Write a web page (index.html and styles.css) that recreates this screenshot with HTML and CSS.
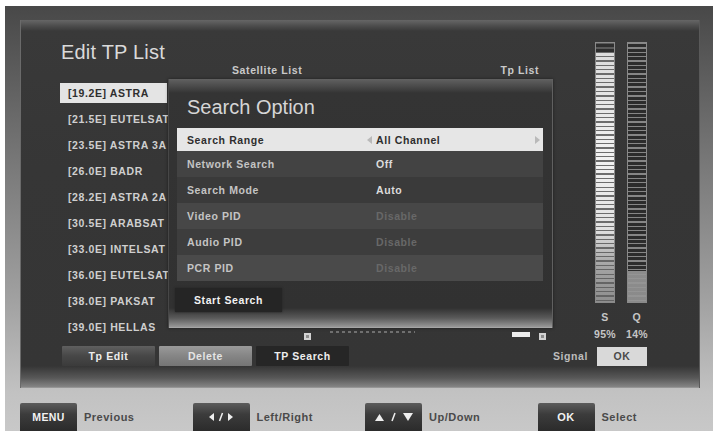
FILE: index.html
```html
<!DOCTYPE html>
<html lang="en">
<head>
<meta charset="utf-8">
<title>Edit TP List</title>
<link rel="stylesheet" href="styles.css">
</head>
<body>
<div class="frame">
  <div class="panel">
    <div class="main">
      <h1 class="title">Edit TP List</h1>
      <div class="heads"><span>Satellite List</span><span>Tp List</span></div>
      <div class="lists">
        <ul class="sat-list">
          <li class="sat is-current">[19.2E] ASTRA</li>
          <li class="sat">[21.5E] EUTELSAT 21A</li>
          <li class="sat">[23.5E] ASTRA 3A</li>
          <li class="sat">[26.0E] BADR</li>
          <li class="sat">[28.2E] ASTRA 2A</li>
          <li class="sat">[30.5E] ARABSAT</li>
          <li class="sat">[33.0E] INTELSAT</li>
          <li class="sat">[36.0E] EUTELSAT W4</li>
          <li class="sat">[38.0E] PAKSAT</li>
          <li class="sat">[39.0E] HELLAS</li>
        </ul>
        <div class="tp-col">
          <div class="tp-foot">
            <span class="knob"></span>
            <span class="ghost"></span>
            <span class="thumb"></span>
            <span class="knob knob-end"></span>
          </div>
        </div>
      </div>
      <div class="actions">
        <button class="act act-edit">Tp Edit</button>
        <button class="act act-delete">Delete</button>
        <button class="act act-search">TP Search</button>
        <span class="signal-label">Signal</span>
      </div>
    </div>

    <div class="meters">
      <div class="bars">
        <div class="bar bar-s"></div>
        <div class="bar bar-q"></div>
      </div>
      <div class="meter-row"><span>S</span><span>Q</span></div>
      <div class="meter-row pct"><span>95%</span><span>14%</span></div>
      <div class="signal-ok">OK</div>
    </div>

    <div class="dialog">
      <h2 class="dialog-title">Search Option</h2>
      <div class="opts">
        <div class="opt is-current">
          <span class="opt-label">Search Range</span>
          <span class="opt-value">
            <svg class="arrow arrow-l" width="5" height="8" viewBox="0 0 5 8"><path d="M0 4 5 0v8z" fill="#b9b9b9"/></svg>
            All Channel
            <svg class="arrow arrow-r" width="5" height="8" viewBox="0 0 5 8"><path d="M5 4 0 0v8z" fill="#b9b9b9"/></svg>
          </span>
        </div>
        <div class="opt"><span class="opt-label">Network Search</span><span class="opt-value">Off</span></div>
        <div class="opt"><span class="opt-label">Search Mode</span><span class="opt-value">Auto</span></div>
        <div class="opt"><span class="opt-label">Video PID</span><span class="opt-value is-off">Disable</span></div>
        <div class="opt"><span class="opt-label">Audio PID</span><span class="opt-value is-off">Disable</span></div>
        <div class="opt"><span class="opt-label">PCR PID</span><span class="opt-value is-off">Disable</span></div>
      </div>
      <button class="start">Start Search</button>
    </div>
  </div>

  <div class="keybar">
    <div class="key-item"><span class="key">MENU</span><span class="key-label">Previous</span></div>
    <div class="key-item">
      <span class="key">
        <svg width="26" height="10" viewBox="0 0 26 10"><path d="M1 5 6 1v8z" fill="#eee"/><path d="M14.5 1 11.5 9" stroke="#eee" stroke-width="1.5"/><path d="M25 5 20 1v8z" fill="#eee"/></svg>
      </span>
      <span class="key-label">Left/Right</span>
    </div>
    <div class="key-item">
      <span class="key">
        <svg width="38" height="10" viewBox="0 0 38 10"><path d="M0 9 4.5 2 9 9z" fill="#eee"/><path d="M20 1 17 9" stroke="#eee" stroke-width="1.5"/><path d="M28 1h10l-5 8z" fill="#eee"/></svg>
      </span>
      <span class="key-label">Up/Down</span>
    </div>
    <div class="key-item"><span class="key key-ok">OK</span><span class="key-label">Select</span></div>
  </div>
</div>
</body>
</html>
```

FILE: styles.css
```css
html, body {
  margin: 0;
  padding: 0;
}

body {
  width: 718px;
  height: 434px;
  overflow: hidden;
  background: #ffffff;
  font-family: "Liberation Sans", Arial, Helvetica, sans-serif;
}

/* outer bezel, dark at the top and fading to light grey */
.frame {
  box-sizing: border-box;
  width: 708px;
  height: 425px;
  margin: 6px 5px 0;
  padding: 14px 13px 0 15px;
  display: flex;
  flex-direction: column;
  background: linear-gradient(to bottom,
    #484848 0%, #5a5a5a 14%, #7c7c7c 40%, #a2a2a2 70%, #c2c2c2 91%, #c8c8c8 100%);
}

/* main dark screen */
.panel {
  position: relative;
  box-sizing: border-box;
  height: 368px;
  padding: 20px 50px 0 40px;
  display: grid;
  grid-template-columns: 530px 55px;
  column-gap: 5px;
  align-items: start;
  background: linear-gradient(to bottom,
    #666 0, #4c4c4c 6px, #393939 11px, #363636 40%,
    #353535 calc(100% - 22px), #585858 calc(100% - 10px),
    #858585 calc(100% - 1px), #a8a8a8 100%);
  box-shadow: inset 1px 0 0 #6a6a6a, inset -1px 0 0 #595959;
}

.main {
  display: flex;
  flex-direction: column;
}

.title {
  margin: 0;
  padding-left: 1px;
  font-size: 20px;
  line-height: 24px;
  font-weight: normal;
  letter-spacing: 0.2px;
  color: #dadada;
}

.heads,
.sat,
.act,
.signal-label,
.meter-row,
.signal-ok,
.opt,
.start {
  font-weight: bold;
  font-size: 10.5px;
  letter-spacing: 0.6px;
}

.heads {
  display: flex;
  justify-content: space-between;
  padding: 0 51px 0 172px;
  line-height: 12px;
  color: #c9c9c9;
}

.lists {
  display: grid;
  grid-template-columns: 107px 1fr;
  margin-top: 4px;
}

.sat-list {
  list-style: none;
  margin: 0;
  padding: 3px 0;
  display: flex;
  flex-direction: column;
  gap: 6px;
}

.sat {
  height: 20px;
  line-height: 20px;
  padding-left: 8px;
  white-space: nowrap;
  color: #cfcfcf;
}

.sat.is-current {
  background: #e4e4e4;
  color: #2e2e2e;
}

.tp-col {
  display: flex;
  flex-direction: column;
  justify-content: flex-end;
}

.tp-foot {
  display: flex;
  align-items: flex-start;
  height: 9px;
  padding-left: 137px;
}

.knob {
  width: 7px;
  height: 7px;
  margin-top: 2px;
  background: #8c8c8c;
  box-shadow: inset 0 0 0 2px #d2d2d2;
}

.knob-end {
  margin-left: 9px;
}

.ghost {
  width: 85px;
  height: 2px;
  margin-left: 19px;
  background: repeating-linear-gradient(to right, #707070 0 3px, transparent 3px 6px);
}

.thumb {
  width: 18px;
  height: 5px;
  margin-top: 1px;
  margin-left: 97px;
  background: #ececec;
}

.actions {
  display: flex;
  align-items: center;
  margin-top: 6px;
  padding-left: 2px;
}

.act {
  width: 93px;
  height: 20px;
  padding: 0;
  border: 0;
  border-radius: 1px;
  line-height: 20px;
  font-family: inherit;
  color: #ededed;
}

.act + .act {
  margin-left: 4px;
}

.act-edit {
  background: linear-gradient(to bottom, #606060 0, #474747 50%, #3b3b3b 100%);
}

.act-delete {
  margin-left: 4px;
  background: linear-gradient(to bottom, #9a9a9a 0, #858585 50%, #757575 100%);
  color: #e4e4e4;
}

.act-search {
  margin-left: 5px;
  background: #262626;
}

.signal-label {
  margin-left: auto;
  margin-right: 2px;
  color: #bdbdbd;
}

/* S / Q meters */
.meters {
  display: flex;
  flex-direction: column;
  margin-top: 2px;
}

.bars {
  display: flex;
  gap: 12px;
}

.bar {
  box-sizing: border-box;
  width: 20px;
  height: 261px;
  border: 1px solid #777;
}

.bar-s {
  background:
    repeating-linear-gradient(to bottom, rgba(95, 95, 95, 0.9) 0 1.3px, transparent 1.3px 4.35px),
    linear-gradient(to bottom, #2e2e2e 0 8.7px, #dcdcdc 8.7px, #f2f2f2 45%, #e0e0e0 72%, #a4a4a4 86%, #8e8e8e 100%);
  border-color: #8a8a8a;
}

.bar-q {
  background:
    repeating-linear-gradient(to bottom, rgba(150, 150, 150, 0.85) 0 1.3px, transparent 1.3px 4.35px),
    linear-gradient(to bottom, #2c2c2c 0, #2c2c2c 88%, #8c8c8c 88%, #8a8a8a 100%);
  border-color: #8a8a8a;
}

.meter-row {
  display: grid;
  grid-template-columns: 20px 20px;
  column-gap: 12px;
  margin-top: 8px;
  line-height: 12px;
  color: #c6c6c6;
}

.meter-row > span {
  display: flex;
  justify-content: center;
  white-space: nowrap;
}

.meter-row.pct {
  margin-top: 5px;
  letter-spacing: 0.3px;
}

.signal-ok {
  width: 50px;
  height: 19px;
  margin: 7px 0 0 2px;
  line-height: 19px;
  text-align: center;
  background: #d9d9d9;
  color: #4a4a4a;
}

/* popup dialog drawn over the lists */
.dialog {
  position: absolute;
  left: 148px;
  top: 59px;
  width: 385px;
  height: 249px;
  box-sizing: border-box;
  padding: 16px 10px 0 9px;
  display: flex;
  flex-direction: column;
  background: linear-gradient(to bottom,
    #616161 0, #4b4b4b 7px, #343434 14px, #313131 calc(100% - 20px),
    #5a5a5a calc(100% - 10px), #989898 calc(100% - 1px), #b2b2b2 100%);
  box-shadow: inset -1px 0 0 #606060, inset 1px 0 0 #474747, 0 0 3px rgba(0, 0, 0, 0.45);
}

.dialog-title {
  margin: 0 0 9px 10px;
  font-size: 20px;
  line-height: 24px;
  font-weight: normal;
  color: #d6d6d6;
}

.opts {
  display: flex;
  flex-direction: column;
}

.opt {
  display: grid;
  grid-template-columns: 189px 1fr;
  align-items: center;
  height: 26px;
  color: #c4c4c4;
}

.opt:nth-child(2) { background: #434343; }
.opt:nth-child(3) { background: #3a3a3a; }
.opt:nth-child(4) { background: #474747; }
.opt:nth-child(5) { background: #3d3d3d; }
.opt:nth-child(6) { background: #4a4a4a; }

.opt.is-current {
  height: 23px;
  background: #e6e6e6;
  color: #2e2e2e;
}

.opt-label {
  padding-left: 10px;
  white-space: nowrap;
}

.opt-value {
  display: flex;
  align-items: center;
  padding-left: 10px;
  white-space: nowrap;
  color: #dcdcdc;
}

.is-current .opt-value {
  color: #2e2e2e;
}

.opt-value.is-off {
  color: #686868;
}

.arrow-l {
  margin-left: -9px;
  margin-right: 4px;
}

.arrow-r {
  margin-left: auto;
  margin-right: 3px;
}

.start {
  align-self: flex-start;
  width: 107px;
  height: 24px;
  margin: 7px 0 0 -2px;
  padding: 0;
  border: 0;
  line-height: 24px;
  font-family: inherit;
  color: #f2f2f2;
  background: #252525;
  box-shadow: 0 0 2px #222;
}

/* remote-key legend along the bottom */
.keybar {
  box-sizing: border-box;
  height: 43px;
  padding-top: 15px;
  display: grid;
  grid-template-columns: repeat(4, 172.5px);
}

.key-item {
  display: flex;
  align-items: center;
  gap: 7px;
}

.key {
  width: 57px;
  height: 28px;
  display: flex;
  align-items: center;
  justify-content: center;
  border-radius: 2px 2px 0 0;
  background: linear-gradient(to bottom, #5c5c5c 0, #3c3c3c 40%, #2b2b2b 100%);
  color: #f2f2f2;
  font-weight: bold;
  font-size: 10.5px;
  letter-spacing: 0.4px;
}

.key-ok {
  font-size: 11px;
}

.key-label {
  color: #4a4a4a;
  font-weight: bold;
  font-size: 11px;
  letter-spacing: 0.5px;
}
```
